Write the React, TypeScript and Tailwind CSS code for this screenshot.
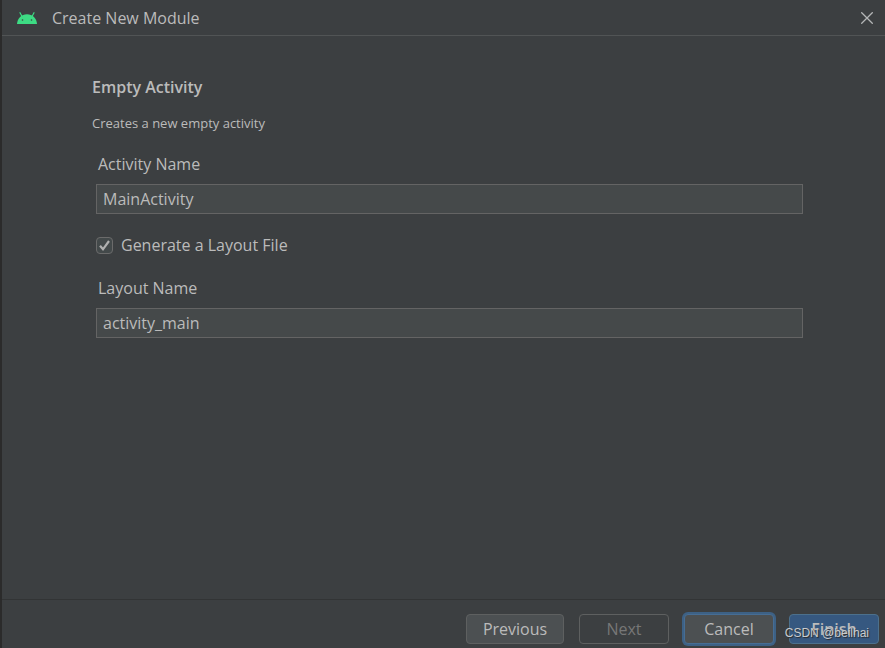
import type { ButtonHTMLAttributes } from 'react'
import clsx from 'clsx'

interface TextFieldProps {
  id: string
  label: string
  defaultValue: string
}

interface DialogButtonProps extends ButtonHTMLAttributes<HTMLButtonElement> {
  variant?: 'default' | 'focused' | 'primary'
}

function AndroidIcon() {
  return (
    <svg viewBox="0 0 20 12" className="h-3 w-5 shrink-0" aria-hidden="true">
      <path d="M0 12C.3 6.5 4.5 2.3 10 2.3S19.7 6.5 20 12z" fill="#3ddc84" />
      <path d="M5 4.5 3 .7M15 4.5 17 .7" stroke="#3ddc84" strokeWidth="1.2" strokeLinecap="round" />
      <circle cx="5.5" cy="8" r="0.8" fill="#3c3f41" />
      <circle cx="14.5" cy="8" r="0.8" fill="#3c3f41" />
    </svg>
  )
}

function CloseIcon() {
  return (
    <svg viewBox="0 0 12 12" className="h-3 w-3" aria-hidden="true">
      <path d="M.3.3l11.4 11.4M11.7.3.3 11.7" stroke="#b4b6b7" strokeWidth="1.3" />
    </svg>
  )
}

function TextField({ id, label, defaultValue }: TextFieldProps) {
  return (
    <div className="flex flex-col">
      <label htmlFor={id} className="pl-1.5 leading-6">
        {label}
      </label>
      <input
        id={id}
        type="text"
        defaultValue={defaultValue}
        className="mt-2 ml-1 h-[30px] border border-[#646464] bg-[#45494a] px-1.5 outline-none"
      />
    </div>
  )
}

function Checkbox({ label }: { label: string }) {
  return (
    <label className="ml-1 flex items-center gap-2 leading-6">
      <span className="grid">
        <input
          type="checkbox"
          defaultChecked
          className="peer col-start-1 row-start-1 size-[17px] appearance-none rounded-sm border border-[#6b6b6b] bg-[#43494a]"
        />
        <svg
          viewBox="0 0 17 17"
          className="pointer-events-none invisible col-start-1 row-start-1 size-[17px] peer-checked:visible"
          aria-hidden="true"
        >
          <path d="M4 8.7l3 3.6 6-8.3" fill="none" stroke="#b0b0b0" strokeWidth="2.2" />
        </svg>
      </span>
      {label}
    </label>
  )
}

function DialogButton({ variant = 'default', className, ...props }: DialogButtonProps) {
  return (
    <button
      type="button"
      className={clsx(
        'h-[30px] rounded border leading-none disabled:border-[#5e6060] disabled:bg-transparent disabled:text-[#777777]',
        variant === 'default' && 'border-[#5e6060] bg-[#4c5052]',
        variant === 'focused' && 'border-[#466d94] bg-[#4c5052] ring-2 ring-[#3d6185]',
        variant === 'primary' && 'border-[#4c708c] bg-[#365880] font-semibold',
        className
      )}
      {...props}
    />
  )
}

export default function App() {
  return (
    <div className="relative flex min-h-screen flex-col border-l-2 border-[#2b2b2b] bg-[#3c3f41] font-['Open_Sans','Noto_Sans',sans-serif] text-base text-[#bbbbbb]">
      <header className="flex h-9 items-center border-b border-[#515455] pr-3 pl-[15px]">
        <AndroidIcon />
        <h1 className="ml-[15px] flex-1">Create New Module</h1>
        <button type="button" aria-label="Close">
          <CloseIcon />
        </button>
      </header>

      <main className="flex flex-1 flex-col gap-[19px] pt-[39px] pr-[82px] pl-[90px]">
        <div className="-mb-0.5">
          <h2 className="font-semibold leading-6">Empty Activity</h2>
          <p className="mt-3 text-[13px] leading-6">Creates a new empty activity</p>
        </div>
        <TextField id="activity-name" label="Activity Name" defaultValue="MainActivity" />
        <Checkbox label="Generate a Layout File" />
        <TextField id="layout-name" label="Layout Name" defaultValue="activity_main" />
      </main>

      <footer className="flex h-[49px] items-center justify-end gap-[15px] border-t border-[#323435] pt-2.5 pr-1.5">
        <DialogButton className="w-[98px]">Previous</DialogButton>
        <DialogButton className="w-[90px]" disabled>
          Next
        </DialogButton>
        <DialogButton className="w-[90px]" variant="focused">
          Cancel
        </DialogButton>
        <DialogButton className="w-[90px]" variant="primary">
          Finish
        </DialogButton>
      </footer>

      <span className="pointer-events-none absolute right-4 bottom-[7px] font-['Liberation_Sans',sans-serif] text-xs leading-4 text-[#c9cbcd] [text-shadow:1px_1px_1px_#2b2b2b]">
        CSDN @beilhai
      </span>
    </div>
  )
}
